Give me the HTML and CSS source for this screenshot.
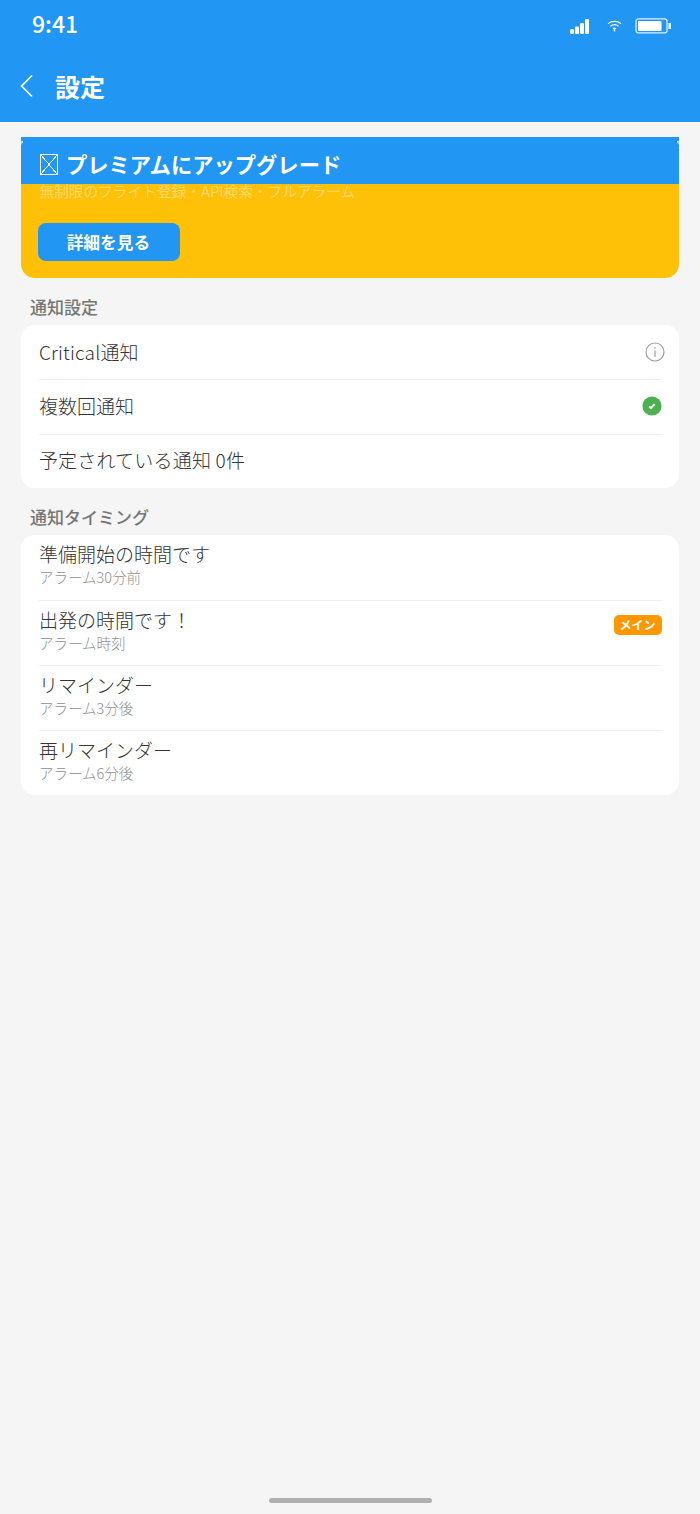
FILE: index.html
```html
<!DOCTYPE html>
<html lang="ja">
<head>
    <meta charset="UTF-8">
    <meta name="viewport" content="width=device-width, initial-scale=1.0">
    <title>設定</title>
    <link rel="stylesheet" href="styles.css">
</head>
<body>
    <div class="app">
        <header class="top-bar">
            <div class="status-bar">
                <span class="status-time">9:41</span>
                <div class="status-icons">
                    <svg class="icon-signal" width="19" height="15" viewBox="0 0 19 15" fill="#fff">
                        <rect x="0" y="10" width="4" height="5" rx="1.5"/>
                        <rect x="5" y="7.5" width="4" height="7.5" rx="1"/>
                        <rect x="10" y="4" width="4" height="11" rx="1"/>
                        <rect x="15" y="0" width="4" height="15" rx="1"/>
                    </svg>
                    <svg class="icon-wifi" width="15" height="12" viewBox="0 0 15 12" fill="none" stroke="#fff" stroke-width="1.1">
                        <path d="M1 3.6C4.8 .6 10.2 .6 14 3.6"/>
                        <path d="M3.4 6.2C5.9 4.3 9.1 4.3 11.6 6.2"/>
                        <path d="M7.5 8v3.5M6 8.6c1-.6 2-.6 3 0" stroke-width="1.4"/>
                    </svg>
                    <svg class="icon-battery" width="36" height="16" viewBox="0 0 36 16">
                        <rect x="1" y=".9" width="31" height="14" rx="2.5" fill="none" stroke="#fff" stroke-opacity=".85" stroke-width="1.3"/>
                        <rect x="3" y="3" width="23.5" height="10" rx="1" fill="#fff"/>
                        <rect x="33.4" y="5" width="2.6" height="6" fill="#fff" fill-opacity=".85"/>
                    </svg>
                </div>
            </div>
            <div class="nav-bar">
                <svg class="back-icon" width="16" height="24" viewBox="0 0 16 24" fill="none" stroke="#fff" stroke-width="1.7">
                    <path d="M13 1.5L2.6 12 13 22.5"/>
                </svg>
                <h1 class="nav-title">設定</h1>
            </div>
        </header>

        <main class="content">
            <div class="premium-card">
                <div class="premium-head">
                    <span class="missing-glyph"></span>
                    <span class="premium-title">プレミアムにアップグレード</span>
                </div>
                <p class="premium-sub">無制限のフライト登録・API検索・フルアラーム</p>
                <button class="premium-button">詳細を見る</button>
            </div>

            <h2 class="section-title">通知設定</h2>
            <div class="list-card">
                <div class="row">
                    <span class="row-label row-label-latin">Critical通知</span>
                    <svg class="info-icon" width="20" height="20" viewBox="0 0 20 20" fill="none" stroke="#9e9e9e">
                        <circle cx="10" cy="10" r="9" stroke-width="1.2"/>
                        <path d="M10 8.6V15" stroke-width="1.2"/>
                        <path d="M10 5.2v1.4" stroke-width="1.4"/>
                    </svg>
                </div>
                <div class="row">
                    <span class="row-label">複数回通知</span>
                    <svg width="20" height="20" viewBox="0 0 20 20">
                        <circle cx="10" cy="10" r="9.6" fill="#4caf50"/>
                        <path d="M7.2 10.4l1.9 1.6 3.6-3.8" fill="none" stroke="#fff" stroke-width="1.9"/>
                    </svg>
                </div>
                <div class="row">
                    <span class="row-label row-label-latin">予定されている通知 0件</span>
                </div>
            </div>

            <h2 class="section-title">通知タイミング</h2>
            <div class="list-card">
                <div class="row row-timing">
                    <div>
                        <div class="row-label">準備開始の時間です</div>
                        <div class="row-sub">アラーム30分前</div>
                    </div>
                </div>
                <div class="row row-timing">
                    <div>
                        <div class="row-label">出発の時間です！</div>
                        <div class="row-sub">アラーム時刻</div>
                    </div>
                    <span class="badge">メイン</span>
                </div>
                <div class="row row-timing">
                    <div>
                        <div class="row-label">リマインダー</div>
                        <div class="row-sub">アラーム3分後</div>
                    </div>
                </div>
                <div class="row row-timing">
                    <div>
                        <div class="row-label">再リマインダー</div>
                        <div class="row-sub">アラーム6分後</div>
                    </div>
                </div>
            </div>
        </main>

        <div class="home-indicator"></div>
    </div>
</body>
</html>
```
FILE: styles.css
```css
* {
    box-sizing: border-box;
}

body {
    margin: 0;
    background-color: #f5f5f5;
    font-family: "Noto Sans CJK JP", "Noto Sans", sans-serif;
}

.app {
    display: flex;
    flex-direction: column;
    height: 100vh;
    overflow: hidden;
}

.top-bar {
    height: 122px;
    background-color: #2196f3;
    color: white;
}

.status-bar {
    display: flex;
    justify-content: space-between;
    align-items: center;
    height: 50px;
    padding: 0 29px 0 32px;
}

.status-time {
    margin-bottom: 4px;
    font-size: 23px;
    font-weight: 500;
}

.status-icons {
    display: flex;
    align-items: center;
    gap: 13px;
    padding-top: 2px;
}

.icon-wifi {
    margin-left: 5px;
}

.nav-bar {
    display: flex;
    align-items: center;
    height: 72px;
    padding: 0 0 0 19px;
}

.nav-title {
    margin: 0 0 0 20px;
    font-size: 25px;
    font-weight: 700;
}

.content {
    flex-grow: 1;
    padding: 15px 21.4px 0;
}

.premium-card {
    height: 141px;
    padding: 0 17px;
    background-color: #ffc107;
    border-radius: 14px;
}

.premium-head {
    position: relative;
    display: flex;
    align-items: center;
    height: 47px;
    margin: 0 -17px;
    padding: 8px 0 0 19px;
    background-color: #2196f3;
    color: white;
}

.premium-head::before,
.premium-head::after {
    content: "";
    position: absolute;
    top: 4px;
    width: 2px;
    height: 4px;
    background-color: #f5f5f5;
}

.premium-head::before {
    left: 0;
    clip-path: polygon(0 0, 100% 0, 0 100%);
}

.premium-head::after {
    right: 0;
    clip-path: polygon(0 0, 100% 0, 100% 100%);
}

.missing-glyph {
    width: 18px;
    height: 21px;
    margin-right: 7.5px;
    border: 1px solid white;
    background:
        linear-gradient(to top right, transparent 48%, white 48%, white 52%, transparent 52%),
        linear-gradient(to bottom right, transparent 48%, white 48%, white 52%, transparent 52%);
}

.premium-title {
    margin-bottom: 2px;
    font-size: 21.3px;
    font-weight: 700;
}

.premium-sub {
    margin: 0;
    padding-left: 1px;
    font-size: 14.7px;
    line-height: 13px;
    color: rgba(255, 255, 255, 0.4);
}

.premium-button {
    display: block;
    width: 142px;
    height: 38px;
    margin-top: 26px;
    padding: 0 2px 0 0;
    border: none;
    border-radius: 8px;
    background-color: #2196f3;
    color: white;
    font-family: inherit;
    font-size: 16.7px;
    font-weight: 700;
}

.section-title {
    margin: 18px 0 8px 8.6px;
    font-size: 17px;
    line-height: 21px;
    font-weight: 500;
    color: #757575;
}

.list-card {
    padding: 0 17px 0 17.5px;
    background-color: white;
    border-radius: 14px;
}

.row {
    display: flex;
    justify-content: space-between;
    align-items: center;
    height: 54.4px;
    padding-bottom: 3px;
    border-top: 1px solid #f0f0f0;
}

.row:first-child {
    padding-bottom: 1px;
    border-top: none;
}

.row-timing,
.row-timing:first-child {
    height: 65px;
    padding-bottom: 7px;
}

.row-label {
    font-size: 19px;
    line-height: 26px;
    font-weight: 300;
    color: #333;
}

.row-label-latin {
    letter-spacing: 0.2px;
}

.row-sub {
    font-size: 14.5px;
    line-height: 20px;
    font-weight: 300;
    color: #8f8f8f;
}

.info-icon {
    margin-right: -3px;
}

.badge {
    padding: 0 6px;
    height: 20px;
    line-height: 20px;
    margin-bottom: 9px;
    border-radius: 5px;
    background-color: #ff9800;
    color: white;
    font-size: 12px;
    font-weight: 700;
}

.home-indicator {
    align-self: center;
    width: 163px;
    height: 5px;
    margin-bottom: 11px;
    border-radius: 3px;
    background-color: #b0b0b0;
}
```
